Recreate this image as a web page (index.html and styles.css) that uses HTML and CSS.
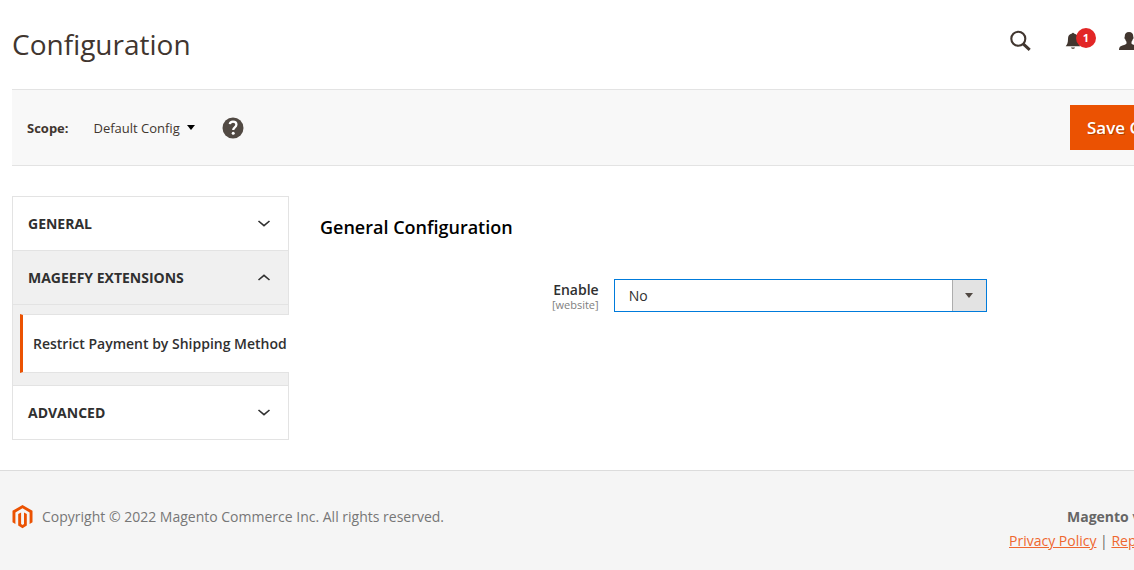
FILE: index.html
```
<!DOCTYPE html>
<html lang="en">
<head>
  <meta charset="UTF-8">
  <meta name="viewport" content="width=device-width, initial-scale=1.0">
  <title>Configuration</title>
  <link rel="stylesheet" href="styles.css">
</head>
<body>

  <header class="page-header">
    <h1 class="page-title">Configuration</h1>
    <div class="header-tools">
      <button type="button" class="tool" aria-label="Search">
        <svg width="22" height="22" viewBox="0 0 22 22"><circle cx="9.300" cy="8.800" r="7" fill="none" stroke="#41362f" stroke-width="2.100"/><path d="M14.200 13.800l6.500 6" stroke="#41362f" stroke-width="3"/></svg>
      </button>
      <button type="button" class="tool tool-bell" aria-label="Notifications">
        <svg width="16" height="18" viewBox="0 0 16 18"><path d="M7 1.500C7 .6 9 .6 9 1.500c2.800.6 4 2.600 4 5.200 0 3.800.6 5.600 2.300 7.600H.700C2.400 12.300 3 10.500 3 6.700c0-2.600 1.200-4.600 4-5.200zM6 15.500h4c-.3 1.800-3.700 1.800-4 0z" fill="#41362f"/></svg>
        <span class="badge">1</span>
      </button>
      <button type="button" class="tool" aria-label="Account">
        <svg width="20" height="18" viewBox="0 0 20 18"><path d="M10 0c3 0 4.300 1.800 4.200 4.300 0 .8.5 1 .3 1.900-.2.800-.7.900-.9 1.500-.2 1-.8 1.700-1.100 2.100v1.600c.6 1.600 6.300 1.800 7 4 .4.900.5 1.700.5 2.600H0c0-.9.100-1.700.5-2.600.7-2.200 6.400-2.400 7-4V9.800c-.3-.4-.9-1.100-1.100-2.100-.2-.6-.7-.7-.9-1.500-.2-.9.300-1.100.3-1.900C5.700 1.800 7 0 10 0z" fill="#41362f"/></svg>
      </button>
    </div>
  </header>

  <div class="scope-bar">
    <span class="scope-label" id="scope-label">Scope:</span>
    <button type="button" class="scope-switch" aria-describedby="scope-label">
      Default Config
      <svg width="8" height="5" viewBox="0 0 8 5"><path d="M0 0h8L4 5z" fill="#000"/></svg>
    </button>
    <a href="#" class="help" aria-label="Help">
      <svg width="22" height="22" viewBox="0 0 22 22"><circle cx="11" cy="11" r="10.500" fill="#514943"/><path d="M7.800 7.200C8 5.300 9.300 4.600 11 4.600c2 0 3.400 1 3.400 2.900 0 2.900-3.200 2.700-3.200 5.500" fill="none" stroke="#fff" stroke-width="2.300"/><circle cx="11.200" cy="16.300" r="1.500" fill="#fff"/></svg>
    </a>
    <button type="button" class="save">Save Config</button>
  </div>

  <div class="columns">
    <nav class="config-nav">
      <a href="#" class="nav-title">
        General
        <svg width="14" height="8" viewBox="0 0 14 8"><path d="M1.500 1L7 5.700 12.500 1" fill="none" stroke="#303030" stroke-width="1.600"/></svg>
      </a>
      <div class="nav-open">
        <a href="#" class="nav-title">
          Mageefy Extensions
          <svg width="14" height="8" viewBox="0 0 14 8"><path d="M1.500 6L7 1.300 12.500 6" fill="none" stroke="#303030" stroke-width="1.600"/></svg>
        </a>
        <div class="nav-items">
          <a href="#" class="nav-item">Restrict Payment by Shipping Method</a>
        </div>
      </div>
      <a href="#" class="nav-title">
        Advanced
        <svg width="14" height="8" viewBox="0 0 14 8"><path d="M1.500 1L7 5.700 12.500 1" fill="none" stroke="#303030" stroke-width="1.600"/></svg>
      </a>
    </nav>

    <main class="config">
      <h2 class="section-title">General Configuration</h2>
      <div class="field">
        <label class="field-label" for="enable">Enable <span class="field-scope">[website]</span></label>
        <div class="select-box">
          <select id="enable" class="select">
            <option>No</option>
            <option>Yes</option>
          </select>
          <span class="select-arrow">
            <svg width="8" height="5" viewBox="0 0 8 5"><path d="M0 0h8L4 5z" fill="#514943"/></svg>
          </span>
        </div>
      </div>
    </main>
  </div>

  <footer class="page-footer">
    <p class="copyright">
      <svg width="21" height="24" viewBox="0 0 20 24"><path d="M10 0L0 5.800v11.500l2.900 1.700V7.400L10 3.300l7.100 4.100V19l2.900-1.700V5.800z" fill="#eb5202"/><path d="M11.500 19L10 19.900 8.600 19V7.400L5.700 9v11.600L10 23.200l4.300-2.600V9l-2.800-1.600z" fill="#eb5202"/></svg>
      Copyright © 2022 Magento Commerce Inc. All rights reserved.
    </p>
    <div class="footer-right">
      <p class="version"><strong>Magento</strong> ver.</p>
      <p class="links"><a href="#">Privacy Policy</a> | <a href="#">Report an Issue</a></p>
    </div>
  </footer>

</body>
</html>
```

FILE: styles.css
```
* {
  box-sizing: border-box;
}

body {
  margin: 0;
  min-height: 100vh;
  display: flex;
  flex-direction: column;
  overflow-x: hidden;
  background: #fff;
  color: #303030;
  font-family: "Open Sans", sans-serif;
  font-size: 14px;
  line-height: 20px;
}

h1, h2, p {
  margin: 0;
}

a {
  color: #eb5202;
}

button {
  font-family: inherit;
  cursor: pointer;
}

svg {
  display: block;
  flex: none;
}

/* Header */
.page-header {
  display: flex;
  justify-content: space-between;
  padding: 24px 0 25px 12px;
}

.page-title {
  color: #41362f;
  font-size: 28px;
  font-weight: 400;
  line-height: 40px;
}

.header-tools {
  display: flex;
  align-items: center;
  gap: 34px;
  width: 125px;
  height: 34px;
}

.tool {
  flex: none;
  position: relative;
  padding: 0;
  border: 0;
  background: none;
}

.tool-bell {
  width: 32px;
}

.tool + .tool + .tool {
  margin-left: -12px;
}

.badge {
  position: absolute;
  top: -4px;
  right: 1px;
  width: 20px;
  height: 20px;
  border-radius: 50%;
  background: #e22626;
  color: #fff;
  font-size: 11px;
  font-weight: 700;
  line-height: 20px;
  text-align: center;
}

/* Scope bar */
.scope-bar {
  display: flex;
  align-items: center;
  margin-left: 12px;
  padding: 15px 0 15px 15px;
  border-top: 1px solid #e3e3e3;
  border-bottom: 1px solid #e3e3e3;
  background: #f8f8f8;
}

.scope-label {
  color: #41362f;
  font-size: 13px;
  font-weight: 700;
}

.scope-switch {
  display: flex;
  align-items: center;
  gap: 7px;
  margin: 0 27px 0 25px;
  padding: 0;
  border: 0;
  background: none;
  color: #41362f;
  font-size: 13px;
}

.save {
  width: 64px;
  height: 45px;
  margin-left: auto;
  padding: 0 0 0 17px;
  border: 0;
  background: #eb5202;
  color: #fff;
  font-size: 17px;
  font-weight: 600;
  line-height: 22px;
  text-align: left;
  text-shadow: 1px 1px 0 rgba(0, 0, 0, 0.25);
  white-space: nowrap;
  overflow: hidden;
}

/* Config columns */
.columns {
  display: flex;
  gap: 31px;
  padding: 30px 0 30px 12px;
}

.config-nav {
  flex: 0 0 277px;
  border: 1px solid #e3e3e3;
  border-top: 0;
}

.nav-title {
  display: flex;
  align-items: center;
  justify-content: space-between;
  height: 54px;
  padding: 0 17px 0 15px;
  border-top: 1px solid #e3e3e3;
  color: #303030;
  font-weight: 700;
  text-decoration: none;
  text-transform: uppercase;
}

.nav-open {
  background: #f0f0f0;
}

.nav-items {
  padding: 9px 0 12px 7px;
  border-top: 1px solid #e3e3e3;
}

.nav-item {
  display: block;
  margin-right: -1px;
  padding: 19px 0 18px 10px;
  border: solid #e3e3e3;
  border-width: 1px 0;
  border-left: 3px solid #eb5202;
  background: #fff;
  color: #303030;
  font-weight: 600;
  text-decoration: none;
  white-space: nowrap;
}

.config {
  flex: 1;
}

.section-title {
  padding: 20px 0;
  color: #000;
  font-size: 18px;
  font-weight: 600;
  line-height: 22px;
}

.field {
  display: grid;
  grid-template-columns: 59fr 79fr 28fr;
  column-gap: 15px;
  margin-top: 21px;
}

.field-label {
  padding-top: 2px;
  font-weight: 600;
  line-height: 18px;
  text-align: right;
}

.field-scope {
  display: block;
  color: #808080;
  font-size: 11px;
  font-weight: 400;
  line-height: 12px;
}

.select-box {
  position: relative;
}

.select {
  appearance: none;
  width: 100%;
  height: 33px;
  padding: 0 48px 0 14px;
  border: 1px solid #007bdb;
  border-radius: 0;
  background: #fff;
  color: #303030;
  font-family: inherit;
  font-size: 14px;
}

.select-arrow {
  position: absolute;
  top: 1px;
  right: 1px;
  bottom: 1px;
  display: flex;
  align-items: center;
  justify-content: center;
  width: 34px;
  border-left: 1px solid #adadad;
  background: #e3e3e3;
  pointer-events: none;
}

/* Footer */
.page-footer {
  flex: 1;
  display: flex;
  justify-content: space-between;
  padding: 34px 0 17px 12px;
  border-top: 1px solid #dcdcdc;
  background: #f5f5f5;
  color: #666;
  line-height: 24px;
}

.copyright {
  display: flex;
  align-items: flex-start;
  gap: 9px;
  color: #777;
}

.footer-right {
  width: 125px;
  white-space: nowrap;
}

.version {
  padding-left: 58px;
}

.links a {
  color: #ef672f;
}
```
